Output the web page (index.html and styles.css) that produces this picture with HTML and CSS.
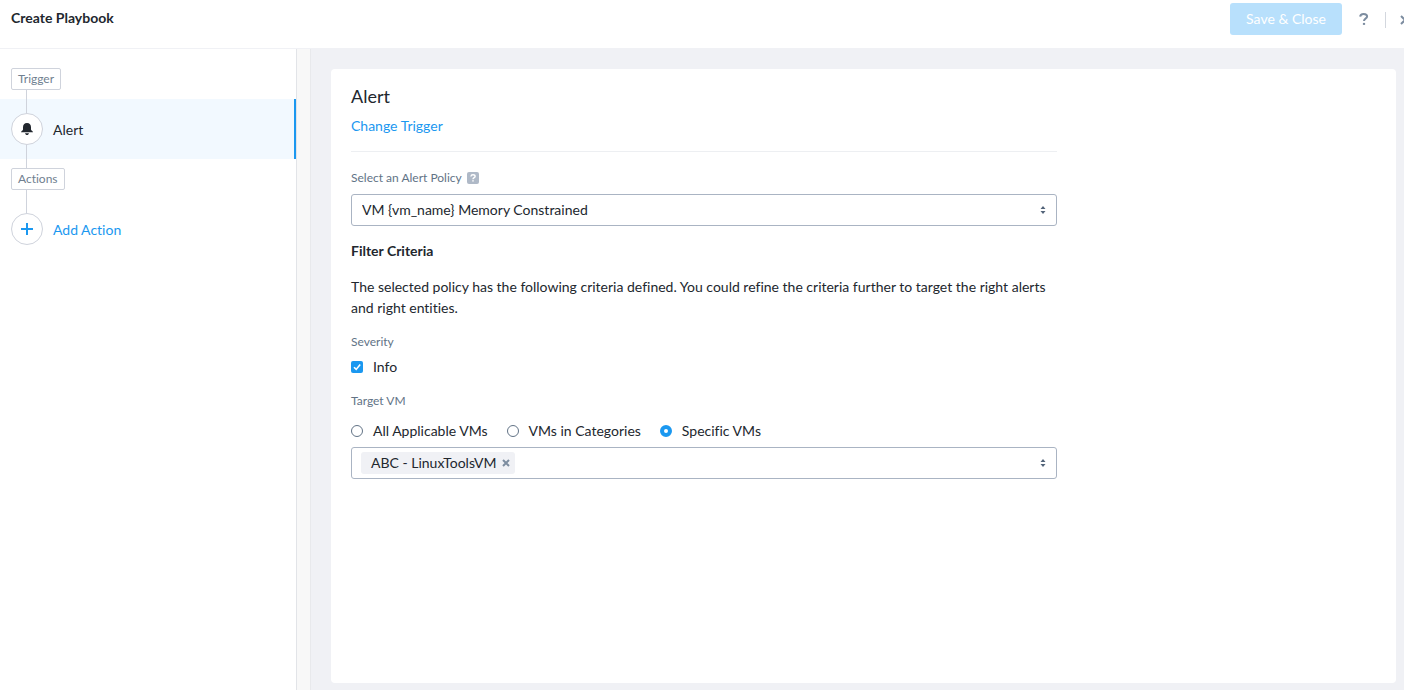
FILE: index.html
```html
<!DOCTYPE html>
<html lang="en">
<head>
<meta charset="utf-8">
<title>Create Playbook</title>
<link rel="stylesheet" href="styles.css">
</head>
<body>
<header class="topbar">
  <h1 class="topbar-title">Create Playbook</h1>
  <button class="save" type="button" disabled>Save &amp; Close</button>
  <button class="icon-button help" type="button" aria-label="Help">
    <svg width="10" height="12" viewBox="0 0 10 12" fill="none" stroke="currentColor" stroke-width="2"><path d="M1.2 3.6C1.3 1.8 2.8 1 4.6 1c2 0 3.5.9 3.5 2.5C8.100 5.500 5 5.300 5 8.100"/><path d="M3.900 10.900h2.200"/></svg>
  </button>
  <button class="icon-button close" type="button" aria-label="Close">
    <svg width="10" height="10" viewBox="0 0 10 10" fill="none" stroke="currentColor" stroke-width="2"><path d="M1 1l8 8M9 1L1 9"/></svg>
  </button>
</header>
<div class="workspace">
  <nav class="sidebar" aria-label="Playbook steps">
    <div class="steps">
      <div class="step-tag"><span class="tag">Trigger</span></div>
      <button class="step step-active" type="button">
        <span class="step-icon">
          <svg width="12" height="12" viewBox="0 0 12 12" fill="#22272e"><path d="M6 0C3.300 0 2 1.900 2 4.200v2.300C2 7.600 0 8 0 9.200h12C12 8 10 7.600 10 6.500V4.200C10 1.900 8.700 0 6 0z"/><path d="M4 10.200h4C7.700 11.400 7 12 6 12s-1.700-.6-2-1.800z"/></svg>
        </span>
        <span class="step-name">Alert</span>
      </button>
      <div class="step-tag step-tag-next"><span class="tag">Actions</span></div>
      <button class="step step-add" type="button">
        <span class="step-icon">
          <svg width="12" height="12" viewBox="0 0 12 12" fill="none" stroke="#1b98f0" stroke-width="2"><path d="M6 0v12M0 6h12"/></svg>
        </span>
        <span class="step-name">Add Action</span>
      </button>
    </div>
  </nav>
  <div class="gutter"></div>
  <main class="main">
    <section class="card">
      <form class="form">
        <div class="intro">
          <h2 class="heading">Alert</h2>
          <a class="link" href="#">Change Trigger</a>
        </div>
        <div class="label-row">
          <label class="label" for="policy">Select an Alert Policy</label>
          <svg class="hint" width="12" height="12" viewBox="0 0 12 12" fill="none"><rect width="12" height="12" rx="2" fill="#afb9c7"/><path d="M3.900 4.500C4 3.300 4.900 2.800 6 2.800c1.200 0 2.100.6 2.100 1.600C8.100 5.700 6 5.600 6 7.300M5.200 8.900h1.600" stroke="#fff" stroke-width="1.400"/></svg>
        </div>
        <div class="field">
          <select class="select" id="policy"><option>VM {vm_name} Memory Constrained</option></select>
          <svg class="caret" width="6" height="8" viewBox="0 0 6 8" fill="#526479"><path d="M3 0l2.500 3h-5zM3 8L.5 5h5z"/></svg>
        </div>
        <h3 class="subheading">Filter Criteria</h3>
        <p class="text">The selected policy has the following criteria defined. You could refine the criteria further to target the right alerts and right entities.</p>
        <fieldset class="group">
          <legend class="label">Severity</legend>
          <label class="choice"><input class="check" type="checkbox" checked>Info</label>
        </fieldset>
        <fieldset class="group">
          <legend class="label">Target VM</legend>
          <div class="choices">
            <label class="choice"><input class="radio" type="radio" name="target">All Applicable VMs</label>
            <label class="choice"><input class="radio" type="radio" name="target">VMs in Categories</label>
            <label class="choice"><input class="radio" type="radio" name="target" checked>Specific VMs</label>
          </div>
        </fieldset>
        <div class="field">
          <div class="chips">
            <span class="chip">ABC - LinuxToolsVM
              <button class="chip-remove" type="button" aria-label="Remove ABC - LinuxToolsVM"><svg width="8" height="8" viewBox="0 0 8 8" fill="none" stroke="currentColor" stroke-width="2"><path d="M1 1l6 6M7 1L1 7"/></svg></button>
            </span>
            <input class="chip-input" type="text" aria-label="Virtual machines">
          </div>
          <svg class="caret" width="6" height="8" viewBox="0 0 6 8" fill="#526479"><path d="M3 0l2.500 3h-5zM3 8L.5 5h5z"/></svg>
        </div>
      </form>
    </section>
  </main>
</div>
</body>
</html>
```
FILE: styles.css
```css
* { box-sizing: border-box; }

body {
  margin: 0;
  min-height: 100vh;
  display: flex;
  flex-direction: column;
  overflow-x: hidden;
  background: #fff;
  color: #22272e;
  font: 14px/20px Lato, sans-serif;
  font-variant-ligatures: none;
}

h1, h2, h3, p { margin: 0; }
button, input, select { font: inherit; color: inherit; }
button { padding: 0; border: 0; background: none; }
svg { display: block; flex: none; }

.topbar {
  display: flex;
  align-items: flex-start;
  padding: 3px 0 10px 11px;
  border-bottom: 1px solid #f0f1f5;
  overflow: hidden;
}
.topbar-title { flex: 1; padding-top: 5px; font-size: 14px; line-height: 20px; font-weight: 700; }
.save { height: 32px; margin-bottom: 3px; padding: 0 16px; border-radius: 3px; background: #b8e0fc; color: #fff; }
.icon-button { display: flex; align-items: center; color: #7d8da0; }
.help { height: 32px; margin-left: 17px; }
.close { height: 16px; margin: 9px -6px 0 16px; padding-left: 14px; border-left: 1px solid #d3d7de; }

.workspace { flex: 1; display: flex; }
.sidebar { flex: 0 0 297px; border-right: 1px solid #e2e4e8; }
.steps { position: relative; padding-top: 19px; }
.steps::before {
  content: "";
  position: absolute;
  z-index: 1;
  top: 30px;
  bottom: 30px;
  left: 26px;
  border-left: 1px solid #cfd3dc;
}
.step-tag { display: flex; padding: 0 11px 9px; }
.step-tag-next { padding-top: 9px; }
.tag {
  position: relative;
  z-index: 2;
  padding: 0 6px;
  border: 1px solid #cfd3dc;
  border-radius: 2px;
  background: #fff;
  color: #708090;
  font-size: 12px;
  line-height: 20px;
}
.step { display: flex; align-items: center; gap: 10px; width: 100%; height: 60px; padding-left: 11px; }
.step-active { border-right: 2px solid #1b98f0; background: #f2f9ff; }
.step-add { color: #1b98f0; }
.step-icon {
  position: relative;
  z-index: 2;
  display: grid;
  place-items: center;
  width: 32px;
  height: 32px;
  border: 1px solid #cfd3dc;
  border-radius: 50%;
  background: #fff;
}
.step-name { padding-top: 2px; }

.gutter { flex: 0 0 14px; border-right: 1px solid #e8e9ec; background: #f8f8f8; }
.main { flex: 1; display: flex; padding: 20px 8px 7px 20px; background: #f0f1f5; }
.card { flex: 1; padding: 15px 20px; border-radius: 4px; background: #fff; }
.form { max-width: 706px; }
.intro { padding-bottom: 15px; border-bottom: 1px solid #edeff2; }
.heading { margin-bottom: 8px; font-size: 18px; line-height: 24px; font-weight: 400; }
.link { display: block; width: fit-content; color: #1b98f0; text-decoration: none; }

.label-row { display: flex; align-items: center; gap: 5px; margin: 18px 0 8px; }
.label { padding: 0; color: #627386; font-size: 12px; line-height: 16px; }
.field { position: relative; }
.select, .chips { width: 100%; height: 32px; border: 1px solid #aab4c3; border-radius: 3px; background: #fff; }
.select { display: block; padding: 0 30px 0 10px; appearance: none; }
.caret { position: absolute; right: 11px; top: 12px; pointer-events: none; }

.subheading { margin: 15px 0; font-size: 14px; line-height: 20px; font-weight: 700; }
.text { line-height: 21px; }
.group { min-width: 0; margin: 16px 0 0; padding: 0; border: 0; }
.choices { display: flex; gap: 19px; padding: 5px 0 6px; }
.choice { display: flex; align-items: center; gap: 10px; margin-top: 7px; width: fit-content; }
.check, .radio { flex: none; width: 12px; height: 12px; margin: 0; appearance: none; }
.check {
  border-radius: 2px;
  background: #1b98f0 url("data:image/svg+xml,%3Csvg xmlns='http://www.w3.org/2000/svg' viewBox='0 0 12 12'%3E%3Cpath d='M3 6.200l2.200 2.200L9.200 3.600' fill='none' stroke='white' stroke-width='1.600'/%3E%3C/svg%3E");
}
.radio { border: 1px solid #627386; border-radius: 50%; background: #fff; }
.radio:checked { border: 4px solid #1b98f0; }
.chips { display: flex; align-items: center; padding: 0 30px 0 9px; }
.chip { display: flex; align-items: center; gap: 5px; height: 22px; padding: 0 5px 0 10px; border-radius: 3px; background: #f0f1f5; }
.chip-remove { color: #7d8da0; }
.chip-input { flex: 1; min-width: 0; border: 0; outline: 0; background: none; }
```
